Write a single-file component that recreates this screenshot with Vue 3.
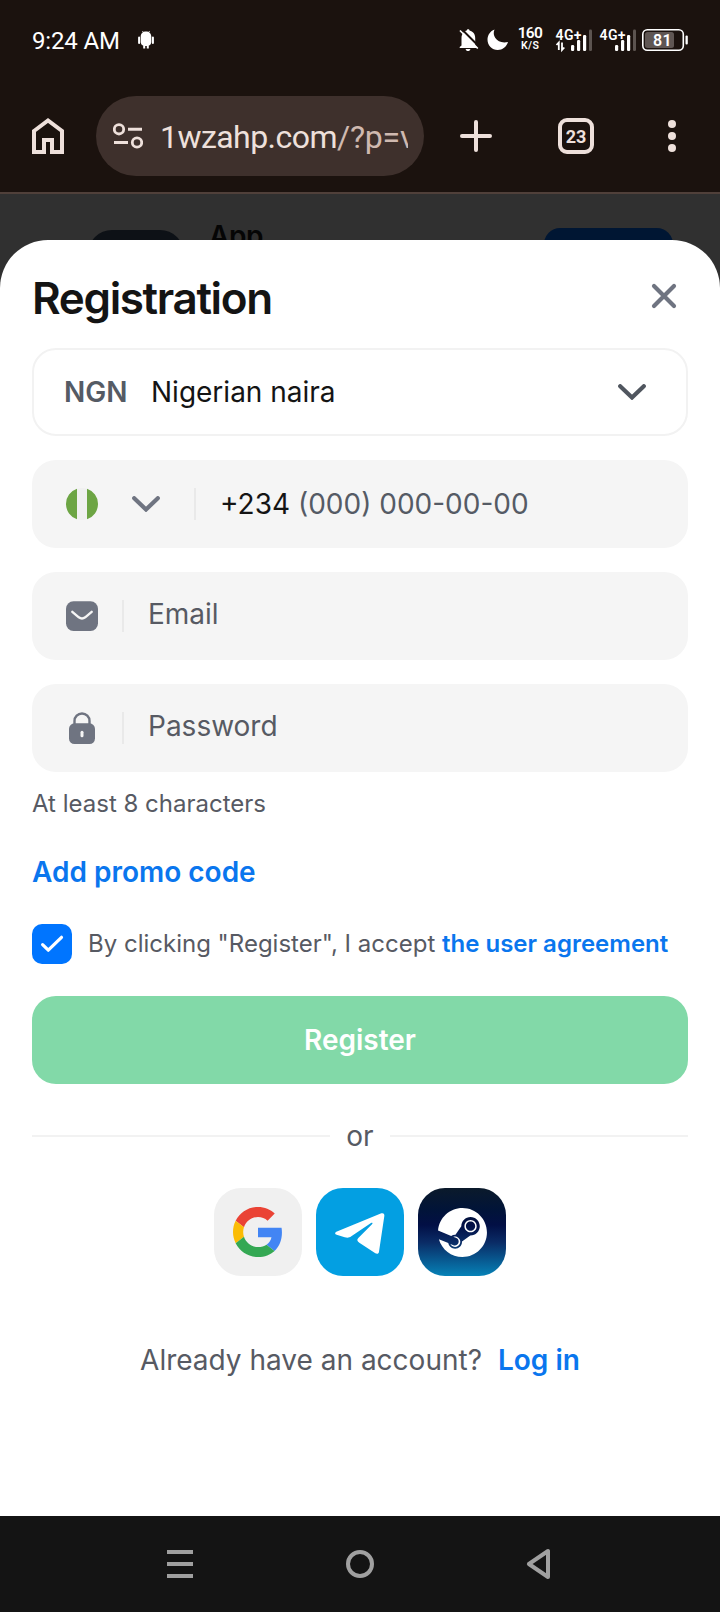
<script setup>
import { ref } from 'vue'

const accepted = ref(true)
const signalBars = [
  { x: 0, h: 6 },
  { x: 6, h: 11 },
  { x: 12, h: 16 },
]
</script>

<template>
  <div class="screen">
    <header class="status">
      <div class="clock">
        <span class="time">9:24 AM</span>
        <svg width="16" height="18" viewBox="0 0 16 18">
          <path d="M2.700 5.500C2.700 2.500 5 .5 8 .5s5.300 2 5.300 5v5.500c0 2-1.300 3.300-2.500 3.500v3H8.800v-2.600H7.200v2.600H5.200v-3C4 14.300 2.700 13 2.700 11z" fill="#fff" />
          <path d="M1.100 6.500v5.500M14.900 6.500v5.500" stroke="#fff" stroke-width="2" stroke-linecap="round" />
          <path d="M4.500 0l1 2M11.500 0l-1 2" stroke="#fff" stroke-width=".8" />
        </svg>
      </div>
      <svg class="status-icons" width="236" height="40" viewBox="456 20 236 40">
        <path d="M461.500 45.500V38c0-4.200 2.500-6.800 5.300-7.500 0-1.800 2.700-1.800 2.700 0 3.500.8 5.700 3.500 5.700 7.500v7.500l1.800 1.500v.9h-17.300V47z" fill="#fff" />
        <path d="M465.700 49h4.600c0 2.700-4.600 2.700-4.600 0z" fill="#fff" />
        <path d="M461.500 29l18 18" stroke="#1b120e" stroke-width="2" />
        <path d="M460 30.500l17.800 18" stroke="#fff" stroke-width="1.700" />
        <path d="M494.500 29.500c-3 6.500 3 15 13.500 12.500-1.500 4.800-5.500 8-10.300 8-5.700 0-10.200-4.500-10.200-10.200 0-4.800 2.800-8.800 7-10.300z" fill="#fff" />
        <text x="530.300" y="38.300" class="rate" font-size="15.500" textLength="25">160</text>
        <text x="530" y="49" class="rate" font-size="10.500" textLength="18">K/S</text>
        <g v-for="(x, i) in [571, 615]" :key="x">
          <text :x="x - 15.500" y="40" class="net" font-size="14" textLength="26">4G+</text>
          <rect
            v-for="bar in signalBars"
            :key="bar.x"
            :x="x + bar.x"
            :y="51 - bar.h"
            width="3.200"
            :height="bar.h"
            rx="1.200"
            fill="#fff"
          />
          <rect :x="x + 18" y="29.500" width="3" height="21.500" rx="1.200" fill="#5c5450" />
          <path
            v-if="i === 0"
            d="M556.500 45l2.300-2.500V50M562 42.500V50l2.300-2.500"
            fill="none"
            stroke="#fff"
            stroke-width="1.800"
          />
        </g>
        <rect x="642.800" y="29.800" width="40.500" height="20.500" rx="4.500" fill="none" stroke="#fff" stroke-width="1.600" />
        <rect x="645" y="32" width="29" height="16" rx="2.500" fill="#5f5653" />
        <rect x="685.500" y="35.500" width="2.300" height="9" rx="1" fill="#fff" />
        <text x="662.300" y="45.500" class="charge" font-size="16" textLength="18.500">81</text>
      </svg>
    </header>

    <nav class="toolbar">
      <svg class="home" width="32" height="36" viewBox="0 0 32 36">
        <path d="M2 13L16 2.500 30 13v21H20V22h-8v12H2z" fill="none" stroke="#eee0db" stroke-width="4" />
      </svg>
      <div class="address">
        <svg width="30" height="26" viewBox="0 0 30 26" fill="none" stroke="#eee0db">
          <circle cx="6" cy="6.300" r="4.700" stroke-width="2.800" />
          <circle cx="24" cy="19.500" r="4.700" stroke-width="2.800" />
          <path d="M15 6.300h14M1 19.500h14" stroke-width="3" />
        </svg>
        <span class="url">1wzahp.com<span class="path">/?p=v</span></span>
      </div>
      <svg class="plus" width="32" height="32" viewBox="0 0 32 32">
        <path d="M16 2v28M2 16h28" stroke="#eee0db" stroke-width="4" stroke-linecap="round" />
      </svg>
      <div class="tabs">23</div>
      <svg class="dots" width="8" height="32" viewBox="0 0 8 32" fill="#eee0db">
        <circle cx="4" cy="4" r="4" />
        <circle cx="4" cy="16" r="4" />
        <circle cx="4" cy="28" r="4" />
      </svg>
    </nav>

    <main class="page">
      <div class="banner">
        <div class="app-icon"></div>
        <span class="app-name">App</span>
        <div class="app-button"></div>
      </div>

      <section class="sheet">
        <div class="head">
          <h1>Registration</h1>
          <svg width="26" height="26" viewBox="0 0 26 26">
            <path d="M3 3l20 20M23 3L3 23" stroke="#6f7481" stroke-width="4.200" stroke-linecap="round" />
          </svg>
        </div>

        <div class="field currency">
          <b class="code">NGN</b>
          <span class="name">Nigerian naira</span>
          <svg class="chev" width="28" height="16" viewBox="0 0 28 16">
            <path d="M2.200 2.200L14 13.500 25.800 2.200" fill="none" stroke="#50565f" stroke-width="4.200" stroke-linecap="round" />
          </svg>
        </div>

        <div class="field phone">
          <svg width="32" height="32" viewBox="0 0 32 32">
            <circle cx="16" cy="16" r="16" fill="#f0f0f0" />
            <path d="M11 .8a16 16 0 0 0 0 30.400zM21 .8a16 16 0 0 1 0 30.400z" fill="#6da544" />
          </svg>
          <svg class="flag-chev" width="28" height="16" viewBox="0 0 28 16">
            <path d="M2.200 2.200L14 13.500 25.800 2.200" fill="none" stroke="#6f7481" stroke-width="4.200" stroke-linecap="round" />
          </svg>
          <i class="rule"></i>
          <span class="number">+234 <span class="mask">(000) 000-00-00</span></span>
        </div>

        <div class="field">
          <svg width="32" height="32" viewBox="0 0 32 32">
            <rect y="1.300" width="32" height="29.700" rx="7.500" fill="#6f7481" />
            <path d="M6.300 11.800l6.500 5.500c2 1.500 4.400 1.500 6.400 0l6.500-5.500" fill="none" stroke="#f5f5f5" stroke-width="2.400" stroke-linecap="round" />
          </svg>
          <i class="rule"></i>
          <span class="hint email">Email</span>
        </div>

        <div class="field">
          <svg width="32" height="32" viewBox="0 0 32 32">
            <path d="M8.500 13V9a7.500 7.500 0 0 1 15 0v4" fill="none" stroke="#6f7481" stroke-width="2.400" />
            <rect x="3" y="11.300" width="26" height="20.700" rx="5.500" fill="#6f7481" />
            <rect x="14.500" y="18.700" width="3" height="6.600" rx="1.500" fill="#f5f5f5" />
          </svg>
          <i class="rule"></i>
          <span class="hint password">Password</span>
        </div>

        <p class="note">At least 8 characters</p>
        <a class="promo">Add promo code</a>

        <label class="agree">
          <span class="box" @click="accepted = !accepted">
            <svg v-if="accepted" width="40" height="40" viewBox="0 0 40 40">
              <path d="M10.600 20.600l5.700 5.600L29.500 13.300" fill="none" stroke="#fff" stroke-width="3.200" stroke-linecap="round" stroke-linejoin="round" />
            </svg>
          </span>
          <span class="terms">By clicking "Register", I accept <b>the user agreement</b></span>
        </label>

        <button class="register">Register</button>

        <div class="or"><i></i><span>or</span><i></i></div>

        <div class="social">
          <div class="tile google">
            <svg width="50" height="50" viewBox="0 0 48 48">
              <path fill="#ea4335" d="M24 9.500c3.540 0 6.710 1.220 9.210 3.600l6.850-6.850C35.900 2.380 30.470 0 24 0 14.620 0 6.510 5.380 2.560 13.220l7.980 6.190C12.430 13.720 17.740 9.500 24 9.500z" />
              <path fill="#4285f4" d="M46.980 24.550c0-1.570-.15-3.090-.38-4.550H24v9.020h12.940c-.58 2.960-2.260 5.480-4.780 7.180l7.730 6c4.510-4.180 7.090-10.360 7.090-17.650z" />
              <path fill="#fbbc05" d="M10.530 28.590c-.48-1.450-.76-2.990-.76-4.590s.27-3.140.76-4.590l-7.980-6.190C.92 16.460 0 20.120 0 24c0 3.880.92 7.540 2.560 10.780l7.970-6.190z" />
              <path fill="#34a853" d="M24 48c6.480 0 11.930-2.130 15.890-5.810l-7.730-6c-2.150 1.450-4.920 2.300-8.160 2.300-6.260 0-11.570-4.220-13.470-9.910l-7.980 6.190C6.510 42.620 14.620 48 24 48z" />
            </svg>
          </div>
          <div class="tile telegram">
            <svg width="88" height="88" viewBox="0 0 264 264">
              <path fill="#fff" d="M61 131L196 76c6-2 10 1 9 8l-16 107c-1 6-5 8-11 5l-48-32c-7-5-8-9-3-14l41-41c3-4 1-6-3-4l-59 40c-7 5-12 5-20 3l-24-8c-6-2-6-6-1-9z" />
            </svg>
          </div>
          <div class="tile steam">
            <svg width="49" height="49" viewBox="0 0 24 24">
              <path fill="#fff" d="M11.979 0C5.678 0 .511 4.860.022 11.037l6.432 2.658c.545-.371 1.203-.59 1.912-.59.063 0 .125.004.188.006l2.861-4.142V8.910c0-2.495 2.028-4.524 4.524-4.524 2.494 0 4.524 2.031 4.524 4.527s-2.030 4.525-4.524 4.525h-.105l-4.076 2.911c0 .052.004.105.004.159 0 1.875-1.515 3.396-3.390 3.396-1.635 0-3.016-1.173-3.331-2.727L.436 15.270C1.862 20.307 6.486 24 11.979 24c6.627 0 11.999-5.373 11.999-12S18.605 0 11.979 0zM7.540 18.210l-1.473-.61c.262.543.714.999 1.314 1.250 1.297.539 2.793-.076 3.332-1.375.263-.63.264-1.319.005-1.949s-.75-1.121-1.377-1.383c-.624-.26-1.290-.249-1.878-.03l1.523.63c.956.4 1.409 1.500 1.009 2.455-.397.957-1.497 1.410-2.454 1.012H7.540zm11.415-9.303c0-1.662-1.353-3.015-3.015-3.015-1.665 0-3.015 1.353-3.015 3.015 0 1.665 1.350 3.015 3.015 3.015 1.663 0 3.015-1.350 3.015-3.015zm-5.273-.005c0-1.252 1.013-2.266 2.265-2.266 1.249 0 2.266 1.014 2.266 2.266 0 1.251-1.017 2.265-2.266 2.265-1.253 0-2.265-1.014-2.265-2.265z" />
            </svg>
          </div>
        </div>

        <p class="login"><span>Already have an account?</span><b>Log in</b></p>
      </section>
    </main>

    <footer class="system">
      <svg width="28" height="28" viewBox="0 0 28 28">
        <path d="M1 2h26M1 14h26M1 26h26" stroke="#a0a0a0" stroke-width="4" />
      </svg>
      <svg width="28" height="28" viewBox="0 0 28 28">
        <circle cx="14" cy="14" r="12" fill="none" stroke="#a0a0a0" stroke-width="4" />
      </svg>
      <svg width="28" height="32" viewBox="0 0 28 32">
        <path d="M22 3v26L2.900 16z" fill="none" stroke="#a0a0a0" stroke-width="4" stroke-linejoin="round" />
      </svg>
    </footer>
  </div>
</template>

<style>
body {
  background: #1b120e;
}
</style>

<style scoped>
.screen {
  width: 720px;
  height: 1612px;
  display: flex;
  flex-direction: column;
  overflow: hidden;
  background: #1b120e;
  font-family: Inter, 'Liberation Sans', sans-serif;
  font-size: 28px;
}
.screen * {
  box-sizing: border-box;
}
svg {
  display: block;
  flex: none;
}
.status {
  height: 80px;
  display: flex;
  justify-content: space-between;
  padding: 0 28px 0 32px;
}
.status-icons {
  margin-top: 20px;
}
.clock {
  height: 80px;
  display: flex;
  align-items: center;
  gap: 18px;
  color: #fff;
}
.time {
  padding-top: 1px;
  font: 24px/30px Roboto, sans-serif;
  letter-spacing: -0.15px;
}
.rate,
.net,
.charge {
  font-family: Roboto, sans-serif;
  font-weight: 600;
  fill: #fff;
}
.rate,
.charge {
  text-anchor: middle;
}
.toolbar {
  flex: none;
  height: 114px;
  border-bottom: 2px solid #50403a;
  display: flex;
  align-items: center;
  padding-left: 32px;
}
.address {
  width: 328px;
  height: 80px;
  margin-left: 32px;
  padding: 0 16px 0 17px;
  border-radius: 40px;
  background: #3e302c;
  display: flex;
  align-items: center;
  gap: 17px;
}
.url {
  flex: 1;
  overflow: hidden;
  white-space: nowrap;
  padding-top: 1px;
  font: 32px/44px Roboto, sans-serif;
  letter-spacing: -0.55px;
  color: #eee0db;
}
.path {
  color: #cfb9b0;
  letter-spacing: -0.2px;
}
.plus {
  margin-left: 36px;
}
.tabs {
  width: 36px;
  height: 36px;
  margin-left: 66px;
  border: 4px solid #eee0db;
  border-radius: 9px;
  color: #eee0db;
  text-align: center;
  font: 700 18px/29px Roboto, sans-serif;
}
.dots {
  margin-left: 74px;
}
.page {
  flex: 1;
  background: #303030;
}
.banner {
  height: 46px;
  overflow: hidden;
  display: flex;
  align-items: flex-start;
  padding-left: 88px;
}
.app-icon {
  width: 96px;
  height: 96px;
  margin-top: 36px;
  border-radius: 24px;
  background: #0d1116;
}
.app-name {
  width: 335px;
  margin-left: 25px;
  margin-top: 25px;
  font-weight: 600;
  line-height: 34px;
  letter-spacing: -0.4px;
  color: #050505;
}
.app-button {
  width: 129px;
  height: 64px;
  margin-top: 34px;
  border-radius: 16px;
  background: #001633;
}
.sheet {
  height: 1276px;
  background: #fff;
  border-radius: 48px 48px 0 0;
  padding: 0 32px;
}
.head {
  height: 108px;
  padding: 8px 11px 0 0;
  display: flex;
  justify-content: space-between;
  align-items: center;
}
.head svg {
  margin-top: -4px;
}
h1 {
  margin: 0;
  font-size: 44px;
  line-height: 56px;
  font-weight: 600;
  letter-spacing: -1.35px;
  color: #141414;
}
.field {
  height: 88px;
  margin-bottom: 24px;
  padding: 0 34px;
  border-radius: 24px;
  background: #f5f5f5;
  display: flex;
  align-items: center;
  white-space: pre;
}
.currency {
  background: #fff;
  border: 2px solid #f2f2f2;
  padding: 0 40px 0 30px;
}
.code {
  font-weight: 600;
  color: #555b65;
  width: 87px;
}
.name {
  flex: 1;
  color: #141414;
}
.flag-chev {
  margin-left: 34px;
}
.rule {
  width: 2px;
  height: 32px;
  margin-left: 24px;
  background: #e9e9e9;
}
.phone .rule {
  margin-left: 34px;
}
.number {
  margin-left: 24px;
  color: #141414;
}
.mask {
  color: #555b65;
}
.hint {
  margin-left: 24px;
  padding-bottom: 5px;
  color: #575a63;
}
.note {
  margin: -8px 0 0;
  font-size: 24px;
  line-height: 32px;
  color: #575a63;
}
.promo {
  display: block;
  margin-top: 34px;
  height: 36px;
  line-height: 36px;
  font-weight: 600;
  color: #0a76ee;
}
.agree {
  margin-top: 34px;
  display: flex;
  align-items: center;
  gap: 16px;
}
.box {
  width: 40px;
  height: 40px;
  border-radius: 10px;
  background: #0075ff;
}
.terms {
  font-size: 24px;
  line-height: 40px;
  white-space: nowrap;
  color: #575a63;
}
.terms b {
  font-weight: 600;
  color: #0a76ee;
}
.register {
  display: block;
  width: 656px;
  height: 88px;
  margin-top: 32px;
  padding: 0;
  border: 0;
  border-radius: 24px;
  background: #82d9a8;
  color: #fff;
  font: 600 28px/88px Inter, sans-serif;
}
.or {
  height: 40px;
  margin-top: 32px;
  display: flex;
  align-items: center;
  color: #575a63;
}
.or span {
  width: 60px;
  text-align: center;
}
.or i {
  flex: 1;
  height: 2px;
  background: #f2f2f2;
}
.social {
  margin-top: 32px;
  display: flex;
  justify-content: center;
  gap: 14px;
}
.tile {
  width: 88px;
  height: 88px;
  border-radius: 27px;
  display: flex;
  align-items: center;
  justify-content: center;
}
.google {
  background: #f0f0f0;
}
.telegram {
  background: #039fe2;
}
.steam {
  background: linear-gradient(#0b1a2b, #011438 24%, #020f45 42%, #0a2c66 62%, #0682b7);
}
.login {
  margin: 64px 0 0;
  display: flex;
  justify-content: center;
  gap: 16px;
  line-height: 40px;
  color: #575a63;
}
.login b {
  font-weight: 600;
  color: #0a76ee;
}
.system {
  flex: none;
  height: 96px;
  background: #141414;
  display: flex;
  justify-content: center;
  align-items: center;
  gap: 152px;
}
</style>
